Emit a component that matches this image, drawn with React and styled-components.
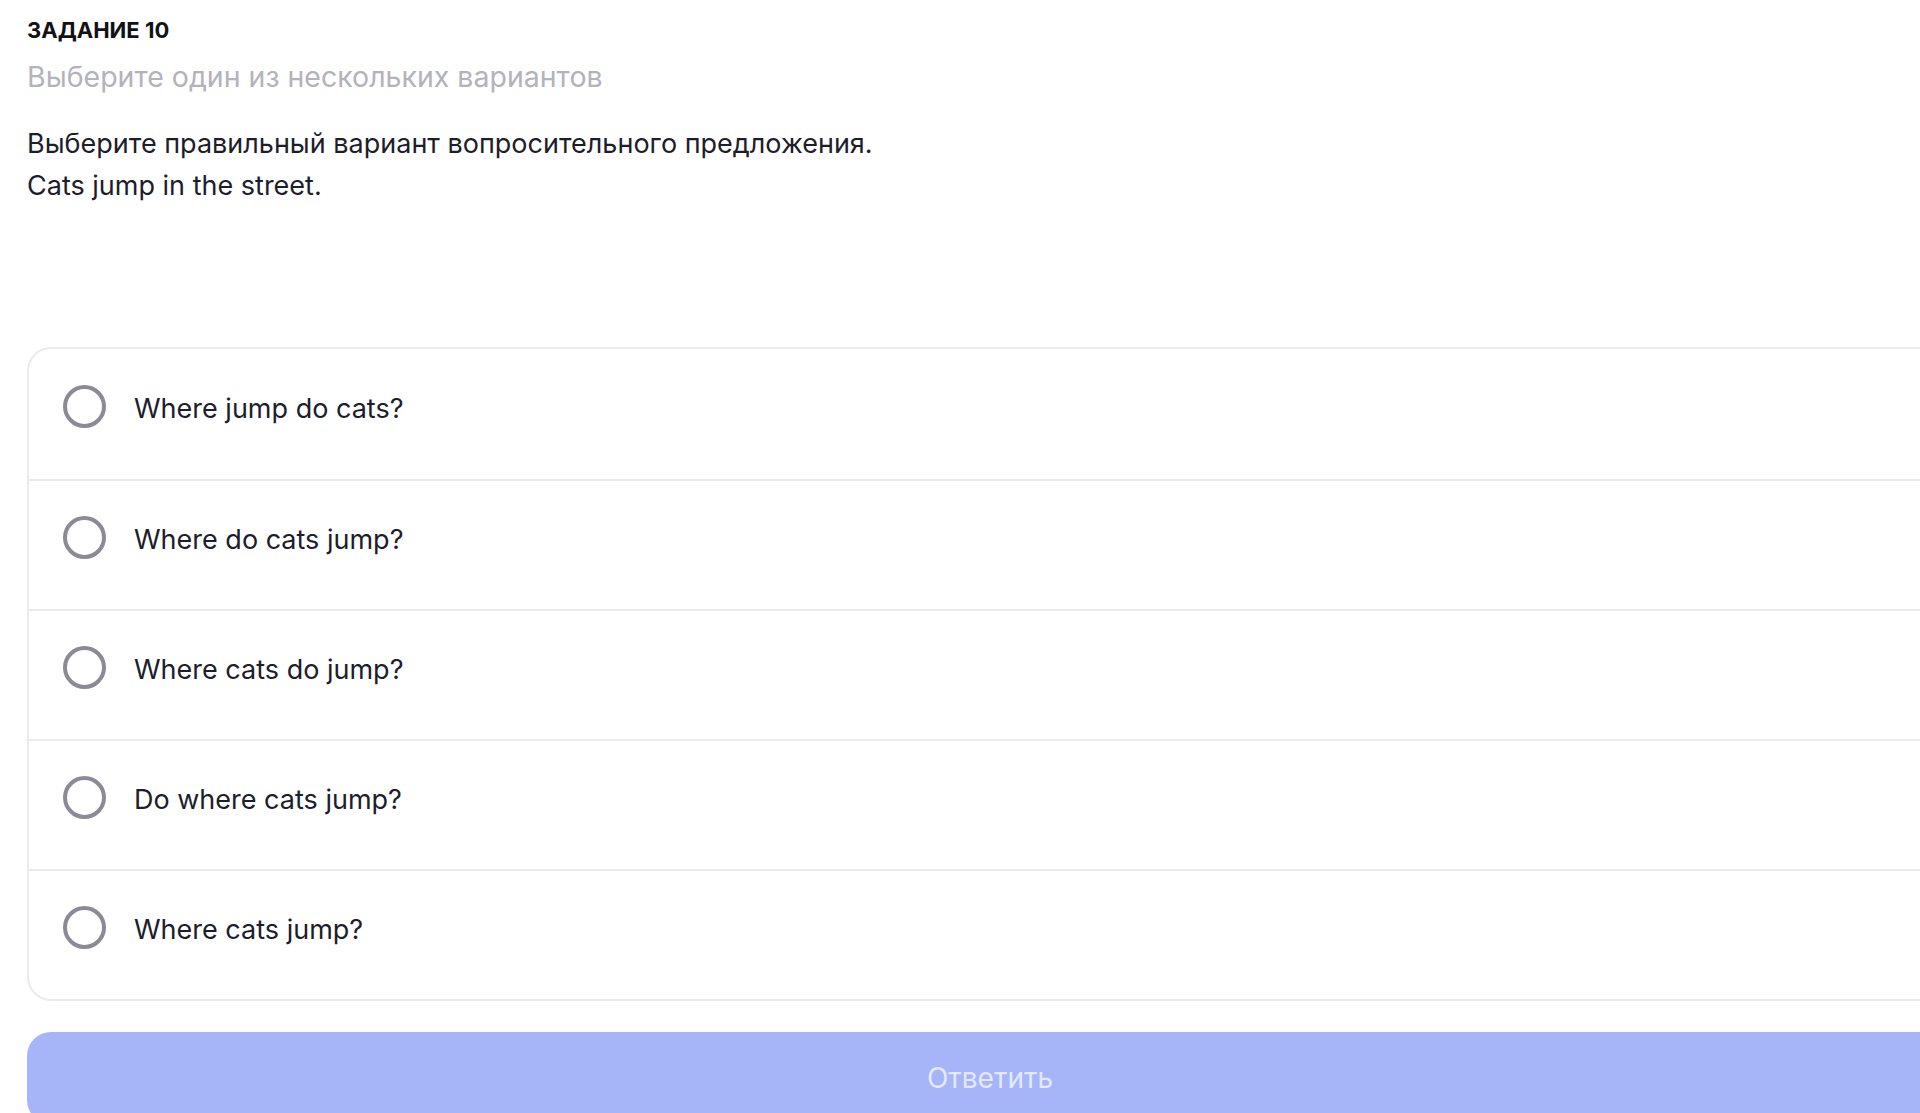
import React, { useState } from 'react';
import styled, { createGlobalStyle } from 'styled-components';

const GlobalStyle = createGlobalStyle`
  html, body {
    margin: 0;
    padding: 0;
    background: #ffffff;
    overflow: hidden;
  }
  body {
    font-family: Inter, "Noto Sans", sans-serif;
    -webkit-font-smoothing: antialiased;
  }
`;

const options = [
  'Where jump do cats?',
  'Where do cats jump?',
  'Where cats do jump?',
  'Do where cats jump?',
  'Where cats jump?',
];

function App() {
  const [selected, setSelected] = useState(null);

  return (
    <>
      <GlobalStyle />
      <Page>
        <TaskLabel>ЗАДАНИЕ 10</TaskLabel>
        <Hint>Выберите один из нескольких вариантов</Hint>
        <Question>
          Выберите правильный вариант вопросительного предложения.
          <br />
          Cats jump in the street.
        </Question>

        <OptionList>
          {options.map((text, i) => (
            <Option key={text} onClick={() => setSelected(i)}>
              <Radio checked={selected === i} />
              <OptionText>{text}</OptionText>
            </Option>
          ))}
        </OptionList>

        <SubmitButton disabled={selected === null}>Ответить</SubmitButton>
      </Page>
    </>
  );
}

const Page = styled.div`
  width: 1926px;
  padding: 18px 0 0 27px;
  display: flex;
  flex-direction: column;
`;

const TaskLabel = styled.div`
  font-size: 22px;
  line-height: 24px;
  font-weight: 700;
  color: #111116;
`;

const Hint = styled.div`
  margin-top: 15px;
  font-size: 28.5px;
  line-height: 40px;
  color: #b3b3bb;
`;

const Question = styled.div`
  margin-top: 26px;
  font-size: 27px;
  line-height: 42px;
  color: #1d1d2b;
`;

const OptionList = styled.div`
  margin-top: 140px;
  border: 2px solid #ebebee;
  border-radius: 24px;
  display: flex;
  flex-direction: column;
`;

const Option = styled.label`
  display: flex;
  align-items: center;
  gap: 28px;
  height: 130px;
  padding: 0 34px 16px;
  box-sizing: border-box;
  cursor: pointer;

  & + & {
    border-top: 2px solid #ebebee;
  }
`;

const Radio = styled.span`
  flex: none;
  width: 43px;
  height: 43px;
  box-sizing: border-box;
  border-radius: 50%;
  border: 4px solid ${p => (p.checked ? '#6f7ff0' : '#8b8a97')};
  box-shadow: ${p => (p.checked ? 'inset 0 0 0 7px #fff, inset 0 0 0 20px #6f7ff0' : 'none')};
`;

const OptionText = styled.span`
  margin-top: 6px;
  font-size: 27px;
  line-height: 40px;
  color: #1d1d2b;
`;

const SubmitButton = styled.button`
  margin-top: 31px;
  height: 92px;
  border: none;
  border-radius: 24px;
  background: ${p => (p.disabled ? '#a6b5f8' : '#6f7ff0')};
  color: ${p => (p.disabled ? '#e3e8fd' : '#ffffff')};
  font-family: Inter, "Noto Sans", sans-serif;
  font-size: 28px;
  cursor: pointer;
`;

export default App;
